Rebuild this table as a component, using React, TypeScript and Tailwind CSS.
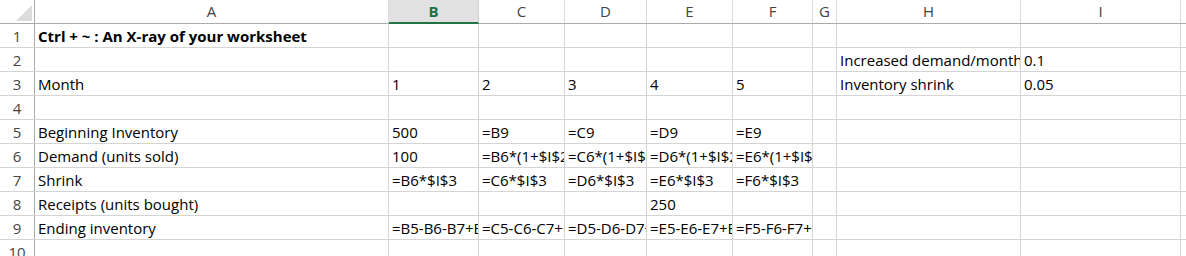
const COLS = ["A", "B", "C", "D", "E", "F", "G", "H", "I"];
const WIDTHS = [354, 90, 86, 82, 86, 80, 24, 184, 160];

type Row = (string | null)[];

const ROWS: Row[] = [
  ["Ctrl + ~ : An X-ray of your worksheet"],
  [null, null, null, null, null, null, null, "Increased demand/month", "0.1"],
  ["Month", "1", "2", "3", "4", "5", null, "Inventory shrink", "0.05"],
  [],
  ["Beginning Inventory", "500", "=B9", "=C9", "=D9", "=E9"],
  ["Demand (units sold)", "100", "=B6*(1+$I$2)", "=C6*(1+$I$2)", "=D6*(1+$I$2)", "=E6*(1+$I$2)"],
  ["Shrink", "=B6*$I$3", "=C6*$I$3", "=D6*$I$3", "=E6*$I$3", "=F6*$I$3"],
  ["Receipts (units bought)", null, null, null, "250"],
  ["Ending inventory", "=B5-B6-B7+B8", "=C5-C6-C7+C8", "=D5-D6-D7+D8", "=E5-E6-E7+E8", "=F5-F6-F7+F8"],
  [],
];

const font = "font-['Open_Sans','Lato',sans-serif]";

function ColumnHeader() {
  return (
    <div className="flex h-[24px] border-b border-[#ababab]">
      {/* select-all corner */}
      <div className="relative w-[35px] shrink-0 border-r border-[#ababab] bg-white">
        <svg className="absolute left-[16px] top-[5px]" width="16" height="16" viewBox="0 0 16 16">
          <polygon points="16,0 16,16 0,16" fill="#dcdcdc" />
        </svg>
      </div>
      {COLS.map((c, i) =>
        c === "B" ? (
          <div
            key={c}
            style={{ width: WIDTHS[i] }}
            className="shrink-0 flex items-center justify-center bg-[#e1e1e1] border-r border-[#d0d0d0] border-b-2 border-b-[#217346] -mb-px text-[15px] font-bold text-[#217346]"
          >
            {c}
          </div>
        ) : (
          <div
            key={c}
            style={{ width: WIDTHS[i] }}
            className="shrink-0 flex items-center justify-center bg-white border-r border-[#dadada] text-[15px] text-[#444]"
          >
            {c}
          </div>
        )
      )}
      <div className="flex-1 bg-white" />
    </div>
  );
}

function SheetRow({ n, cells }: { n: number; cells: Row }) {
  return (
    <div className="flex h-[24px] border-b border-[#d4d4d4]">
      <div className="w-[35px] shrink-0 border-r border-[#ababab] flex items-end justify-center pb-[1px] text-[15px] leading-[20px] text-[#444]">
        {n}
      </div>
      {COLS.map((c, i) => {
        const v = cells[i];
        return (
          <div
            key={c}
            style={{ width: WIDTHS[i] }}
            className={
              "shrink-0 border-r border-[#d4d4d4] flex items-end pl-[3px] pb-[1px] overflow-hidden whitespace-nowrap text-[15px] leading-[20px] text-black" +
              (n === 1 && i === 0 ? " font-bold" : "")
            }
          >
            {v ?? ""}
          </div>
        );
      })}
      <div className="flex-1" />
    </div>
  );
}

export default function App() {
  return (
    <div className={`w-[1186px] h-[256px] overflow-hidden bg-white ${font}`}>
      <ColumnHeader />
      {ROWS.map((r, i) => (
        <SheetRow key={i} n={i + 1} cells={r} />
      ))}
    </div>
  );
}
